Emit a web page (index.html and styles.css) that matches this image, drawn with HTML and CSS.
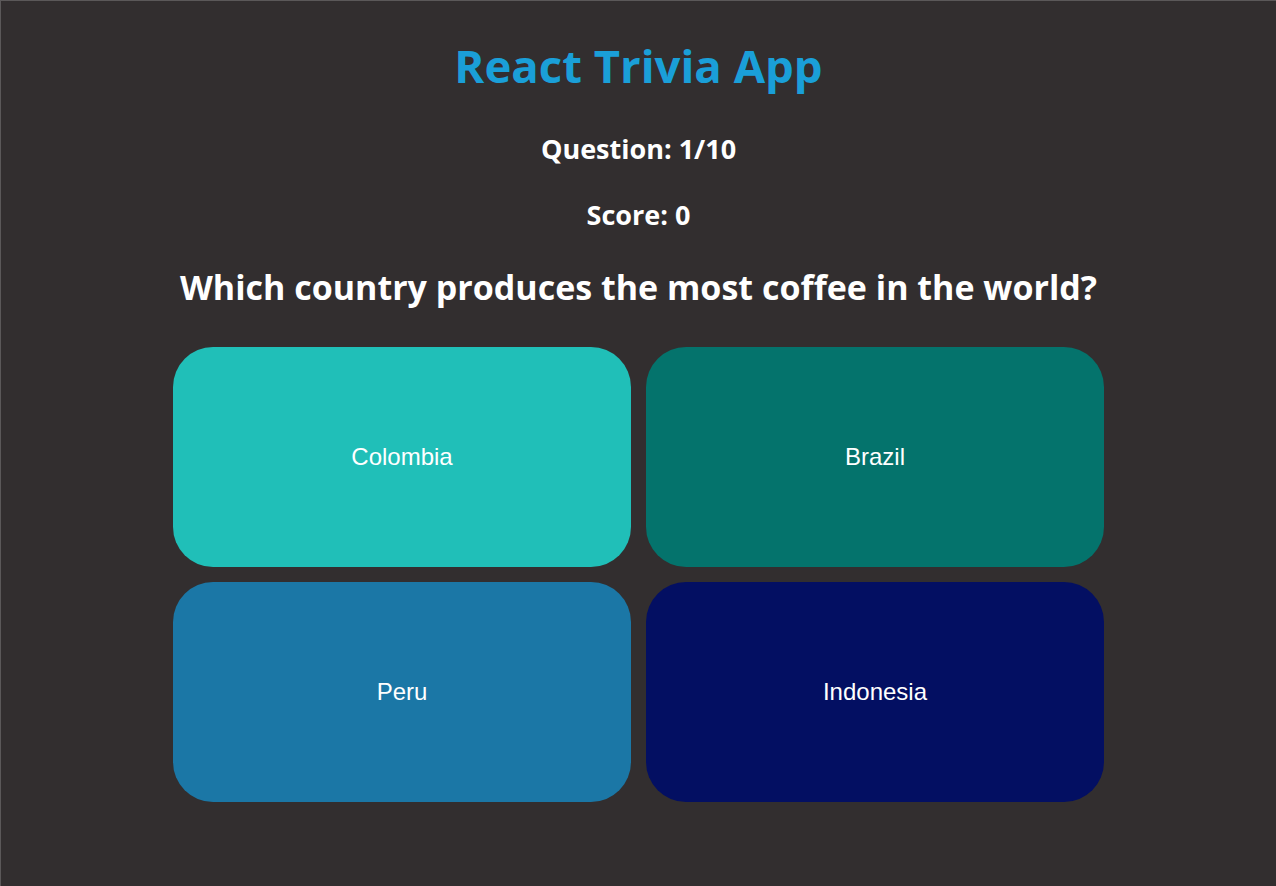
FILE: index.html
```html
<!DOCTYPE html>
<html>
<head>
    <meta charset="UTF-8">
    <title>React Trivia App</title>
    <link rel="stylesheet" href="styles.css">
</head>
<body>
    <div class="app">
        <h1 class="title">React Trivia App</h1>
        <h3 class="stat">Question: 1/10</h3>
        <h3 class="stat">Score: 0</h3>
        <h2 class="question">Which country produces the most coffee in the world?</h2>
        <div class="answers">
            <button class="answer a1">Colombia</button>
            <button class="answer a2">Brazil</button>
            <button class="answer a3">Peru</button>
            <button class="answer a4">Indonesia</button>
        </div>
    </div>
</body>
</html>
```

FILE: styles.css
```css
html, body {
    margin: 0;
    height: 100%;
}

body {
    background: #322e2f;
    border-top: 1px solid #5b5859;
    border-left: 1px solid #5b5859;
    box-sizing: border-box;
    font-family: 'Open Sans', 'Noto Sans', sans-serif;
    color: #fff;
}

.app {
    display: flex;
    flex-direction: column;
    align-items: center;
    padding-top: 36px;
}

.title {
    margin: 0;
    color: #1a9fd8;
    font-size: 45.5px;
    line-height: 56px;
}

.stat {
    margin: 0;
    font-size: 27px;
    line-height: 32px;
}

.title + .stat {
    margin-top: 40px;
}

.stat + .stat {
    margin-top: 34px;
}

.question {
    margin: 36px 0 0;
    font-size: 34px;
    line-height: 40px;
}

.answers {
    display: grid;
    grid-template-columns: 458px 458px;
    grid-auto-rows: 220px;
    gap: 15px;
    margin-top: 40px;
}

.answer {
    border: none;
    border-radius: 40px;
    color: #fff;
    font-family: 'Liberation Sans', Arial, sans-serif;
    font-size: 24px;
    cursor: pointer;
}

.a1 { background: #20bfb8; }
.a2 { background: #04736c; }
.a3 { background: #1b77a6; }
.a4 { background: #030f62; }
```
